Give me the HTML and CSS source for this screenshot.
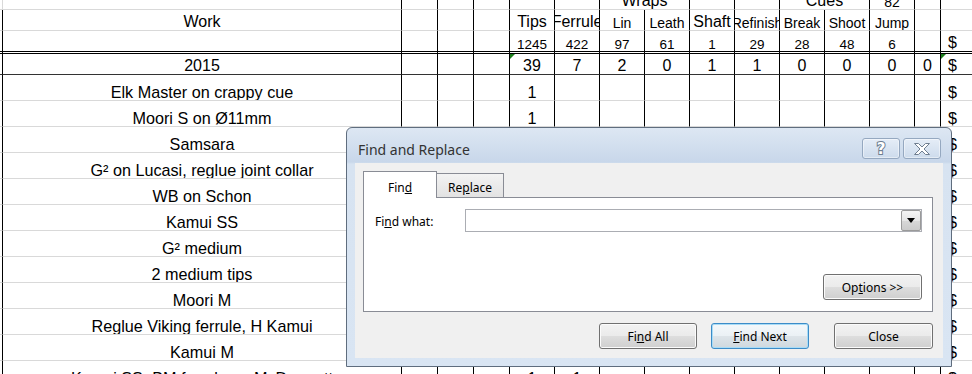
FILE: index.html
```html
<!DOCTYPE html>
<html lang="en">
  <head>
    <meta charset="UTF-8" />
    <title>Work log - Find and Replace</title>
    <link rel="stylesheet" href="styles.css">
  </head>
  <body>
    <div class="sheet">
      <div class="row ra">
        <div class="c g"></div><div class="c"></div><div class="c"></div><div class="c"></div><div class="c"></div>
        <div class="c"></div><div class="c"></div>
        <div class="c big span2">Wraps</div>
        <div class="c"></div><div class="c"></div>
        <div class="c big span2">Cues</div>
        <div class="c sm">82</div>
        <div class="c"></div><div class="c dol"></div>
      </div>
      <div class="row rb">
        <div class="c"></div><div class="c big">Work</div><div class="c"></div><div class="c"></div><div class="c"></div>
        <div class="c big">Tips</div><div class="c big">Ferrule</div><div class="c sm">Lin</div><div class="c sm">Leath</div>
        <div class="c big">Shaft</div><div class="c sm">Refinish</div><div class="c sm">Break</div><div class="c sm">Shoot</div>
        <div class="c sm">Jump</div><div class="c"></div><div class="c dol"></div>
      </div>
      <div class="row rc">
        <div class="c"></div><div class="c"></div><div class="c"></div><div class="c"></div><div class="c"></div>
        <div class="c num">1245</div><div class="c num">422</div><div class="c num">97</div><div class="c num">61</div>
        <div class="c num">1</div><div class="c num">29</div><div class="c num">28</div><div class="c num">48</div>
        <div class="c num">6</div><div class="c"></div><div class="c dol big">$</div>
      </div>
      <div class="row rd">
        <div class="c"></div><div class="c">2015</div><div class="c"></div><div class="c"></div><div class="c"></div>
        <div class="c flag">39</div><div class="c">7</div><div class="c">2</div><div class="c">0</div>
        <div class="c">1</div><div class="c">1</div><div class="c">0</div><div class="c">0</div>
        <div class="c">0</div><div class="c">0</div><div class="c dol flag">$</div>
      </div>
      <div class="row">
        <div class="c"></div><div class="c">Elk Master on crappy cue</div><div class="c"></div><div class="c"></div><div class="c"></div>
        <div class="c">1</div><div class="c"></div><div class="c"></div><div class="c"></div><div class="c"></div>
        <div class="c"></div><div class="c"></div><div class="c"></div><div class="c"></div><div class="c"></div><div class="c dol">$</div>
      </div>
      <div class="row">
        <div class="c"></div><div class="c">Moori S on Ø11mm</div><div class="c"></div><div class="c"></div><div class="c"></div>
        <div class="c">1</div><div class="c"></div><div class="c"></div><div class="c"></div><div class="c"></div>
        <div class="c"></div><div class="c"></div><div class="c"></div><div class="c"></div><div class="c"></div><div class="c dol">$</div>
      </div>
      <div class="row">
        <div class="c"></div><div class="c">Samsara</div><div class="c"></div><div class="c"></div><div class="c"></div>
        <div class="c">1</div><div class="c"></div><div class="c"></div><div class="c"></div><div class="c"></div>
        <div class="c"></div><div class="c"></div><div class="c"></div><div class="c"></div><div class="c"></div><div class="c dol">$</div>
      </div>
      <div class="row">
        <div class="c"></div><div class="c">G² on Lucasi, reglue joint collar</div><div class="c"></div><div class="c"></div><div class="c"></div>
        <div class="c">1</div><div class="c"></div><div class="c"></div><div class="c"></div><div class="c"></div>
        <div class="c"></div><div class="c"></div><div class="c"></div><div class="c"></div><div class="c"></div><div class="c dol">$</div>
      </div>
      <div class="row">
        <div class="c"></div><div class="c">WB on Schon</div><div class="c"></div><div class="c"></div><div class="c"></div>
        <div class="c">1</div><div class="c"></div><div class="c"></div><div class="c"></div><div class="c"></div>
        <div class="c"></div><div class="c"></div><div class="c"></div><div class="c"></div><div class="c"></div><div class="c dol">$</div>
      </div>
      <div class="row">
        <div class="c"></div><div class="c">Kamui SS</div><div class="c"></div><div class="c"></div><div class="c"></div>
        <div class="c">1</div><div class="c"></div><div class="c"></div><div class="c"></div><div class="c"></div>
        <div class="c"></div><div class="c"></div><div class="c"></div><div class="c"></div><div class="c"></div><div class="c dol">$</div>
      </div>
      <div class="row">
        <div class="c"></div><div class="c">G² medium</div><div class="c"></div><div class="c"></div><div class="c"></div>
        <div class="c">1</div><div class="c"></div><div class="c"></div><div class="c"></div><div class="c"></div>
        <div class="c"></div><div class="c"></div><div class="c"></div><div class="c"></div><div class="c"></div><div class="c dol">$</div>
      </div>
      <div class="row">
        <div class="c"></div><div class="c">2 medium tips</div><div class="c"></div><div class="c"></div><div class="c"></div>
        <div class="c">2</div><div class="c"></div><div class="c"></div><div class="c"></div><div class="c"></div>
        <div class="c"></div><div class="c"></div><div class="c"></div><div class="c"></div><div class="c"></div><div class="c dol">$</div>
      </div>
      <div class="row">
        <div class="c"></div><div class="c">Moori M</div><div class="c"></div><div class="c"></div><div class="c"></div>
        <div class="c">1</div><div class="c"></div><div class="c"></div><div class="c"></div><div class="c"></div>
        <div class="c"></div><div class="c"></div><div class="c"></div><div class="c"></div><div class="c"></div><div class="c dol">$</div>
      </div>
      <div class="row">
        <div class="c"></div><div class="c">Reglue Viking ferrule, H Kamui</div><div class="c"></div><div class="c"></div><div class="c"></div>
        <div class="c">1</div><div class="c"></div><div class="c"></div><div class="c"></div><div class="c"></div>
        <div class="c"></div><div class="c"></div><div class="c"></div><div class="c"></div><div class="c"></div><div class="c dol">$</div>
      </div>
      <div class="row">
        <div class="c"></div><div class="c">Kamui M</div><div class="c"></div><div class="c"></div><div class="c"></div>
        <div class="c">1</div><div class="c"></div><div class="c"></div><div class="c"></div><div class="c"></div>
        <div class="c"></div><div class="c"></div><div class="c"></div><div class="c"></div><div class="c"></div><div class="c dol">$</div>
      </div>
      <div class="row">
        <div class="c"></div><div class="c">Kamui SS+BM ferrule on McDermott</div><div class="c"></div><div class="c"></div><div class="c"></div>
        <div class="c">1</div><div class="c">1</div><div class="c"></div><div class="c"></div><div class="c"></div>
        <div class="c"></div><div class="c"></div><div class="c"></div><div class="c"></div><div class="c"></div><div class="c dol">$</div>
      </div>

      <div class="dlg">
        <div class="dlg-title">
          <span class="dlg-caption">Find and Replace</span>
          <div class="cap-btns">
            <div class="cap-btn">
              <svg width="14" height="17" viewBox="0 0 14 17">
                <text x="7" y="14" text-anchor="middle" class="q">?</text>
              </svg>
            </div>
            <div class="cap-btn">
              <svg width="18" height="14" viewBox="0 0 18 14">
                <path d="M1.5 1.5H5.5L9 5L12.5 1.5H16.5L11 7L16.5 12.5H12.5L9 9L5.5 12.5H1.5L7 7Z" fill="#fff" stroke="#6f7e90" stroke-width="1" stroke-linejoin="round"/>
              </svg>
            </div>
          </div>
        </div>
        <div class="dlg-client">
          <div class="tabs">
            <div class="tab active">Fin<u>d</u></div>
            <div class="tab back">Re<u>p</u>lace</div>
          </div>
          <div class="panel">
            <div class="field">
              <label class="lbl">Fi<u>n</u>d what:</label>
              <div class="combo">
                <span class="combo-btn">
                  <svg width="8" height="5" viewBox="0 0 8 5"><path d="M0 0H8L4 5Z" fill="#000"/></svg>
                </span>
              </div>
            </div>
            <button class="btn opt">Op<u>t</u>ions &gt;&gt;</button>
          </div>
          <div class="actions">
            <button class="btn">Fi<u>n</u>d All</button>
            <button class="btn default"><u>F</u>ind Next</button>
            <button class="btn close">Close</button>
          </div>
        </div>
      </div>
    </div>
  </body>
</html>
```

FILE: styles.css
```css
* {
  box-sizing: border-box;
}

html,
body {
  margin: 0;
  overflow: hidden;
}

body {
  background: #fff;
  color: #000;
  font-family: "Liberation Sans", Arial, sans-serif;
}

.sheet {
  position: relative;
  width: 972px;
  height: 374px;
  overflow: hidden;
}

/* spreadsheet grid */
.row {
  display: grid;
  grid-template-columns: 3px 399px 36px 36px 36px repeat(9, 45px) 26px 31px;
  grid-template-rows: 100%;
  height: 26px;
}

.ra { height: 10px; }
.rb { height: 21px; }
.rc { height: 23px; }
.rd { height: 21px; }

.c {
  display: flex;
  align-items: flex-end;
  justify-content: center;
  min-height: 0;
  border-right: 1px solid #000;
  border-bottom: 1px solid #d9d9d9;
  overflow: hidden;
  white-space: nowrap;
  font-size: 16.2px;
  line-height: 1;
}

.ra .c { overflow: visible; }
.c.g { border-right-color: #d9d9d9; }
.rc .c { border-bottom: 3px double #000; }
.rd .c { border-bottom-color: #333; font-size: 16px; }

.span2 { grid-column: span 2; }
.big { font-size: 16px; }
.sm { font-size: 14px; }
.num { font-size: 13.5px; }

.dol {
  justify-content: flex-start;
  padding-left: 7px;
  border-right: none;
}

.flag { position: relative; }

.flag::before {
  content: "";
  position: absolute;
  top: 0;
  left: 0;
  border-top: 5px solid #1b7d1b;
  border-right: 5px solid transparent;
}

/* find and replace dialog */
.dlg {
  position: absolute;
  left: 346px;
  top: 127px;
  width: 606px;
  height: 240px;
  display: flex;
  flex-direction: column;
  border: 1px solid #5f6d7e;
  border-radius: 6px 6px 0 0;
  background: linear-gradient(#dde7f3, #c8d7ea 34px, #d7e3f1 36px, #d9e5f3);
  font-family: "Noto Sans", sans-serif;
  font-size: 12px;
  color: #000;
}

.dlg-title {
  height: 35px;
  display: flex;
  justify-content: space-between;
  align-items: flex-start;
  padding: 10px 10px 0 11px;
}

.dlg-caption {
  margin-top: 2px;
  font-size: 14px;
  line-height: 20px;
  color: #333;
}

.cap-btns {
  display: flex;
  gap: 3px;
}

.cap-btn {
  width: 38px;
  height: 21px;
  display: flex;
  align-items: center;
  justify-content: center;
  border: 1px solid #95a8c0;
  border-radius: 3px;
  background: linear-gradient(#e5edf7, #cddbec);
  box-shadow: inset 0 0 0 1px rgba(255, 255, 255, 0.45);
}

.q {
  font-family: "DejaVu Sans", sans-serif;
  font-weight: bold;
  font-size: 15px;
  fill: #fff;
  stroke: #6f7e90;
  stroke-width: 2px;
  paint-order: stroke;
}

.dlg-client {
  height: 195px;
  margin: 0 8px;
  padding: 8px 10px 0 8px;
  display: flex;
  flex-direction: column;
  background: #f0f0f0;
}

.tabs {
  height: 26px;
  display: flex;
  align-items: flex-end;
}

.tab {
  display: flex;
  justify-content: center;
  align-items: center;
  border: 1px solid #898c95;
  border-bottom: 0;
}

.tab.active {
  position: relative;
  z-index: 1;
  width: 74px;
  height: 27px;
  padding-top: 4px;
  margin-bottom: -1px;
  background: #fff;
}

.tab.back {
  width: 67px;
  height: 24px;
  padding-top: 3px;
  border-left: 0;
  background: linear-gradient(#f3f3f3, #e2e2e2);
}

.panel {
  height: 115px;
  display: flex;
  flex-direction: column;
  justify-content: space-between;
  padding: 11px 10px 11px 11px;
  border: 1px solid #898c95;
  background: #fff;
}

.field {
  display: flex;
  align-items: center;
}

.lbl {
  width: 90px;
  padding-top: 2px;
}

.combo {
  flex: 1;
  height: 23px;
  display: flex;
  justify-content: flex-end;
  border: 1px solid #abadb3;
  background: #fff;
}

.combo-btn {
  width: 20px;
  height: 21px;
  display: flex;
  align-items: center;
  justify-content: center;
  border: 1px solid #9a9a9a;
  border-radius: 2px;
  background: linear-gradient(#f4f4f4, #e6e6e6 50%, #d8d8d8 50%, #cbcbcb);
}

.btn {
  width: 98px;
  height: 26px;
  padding: 0;
  border: 1px solid #707070;
  border-radius: 3px;
  background: linear-gradient(#f2f2f2, #ebebeb 48%, #dddddd 52%, #cfcfcf);
  box-shadow: inset 0 0 0 1px #fbfbfb;
  font-family: "Noto Sans", sans-serif;
  font-size: 12px;
  color: #000;
}

.btn.opt {
  align-self: flex-end;
  width: 99px;
}

.btn.default {
  border-color: #3c8cc8;
  background: linear-gradient(#f4f8fb, #ebf1f5 48%, #dde4e9 52%, #cfd8de);
  box-shadow: inset 0 0 0 1px #a9dcf6;
}

.actions {
  display: flex;
  justify-content: flex-end;
  gap: 14px;
  margin-top: 11px;
}

.btn.close {
  width: 99px;
  margin-left: 11px;
}
```
